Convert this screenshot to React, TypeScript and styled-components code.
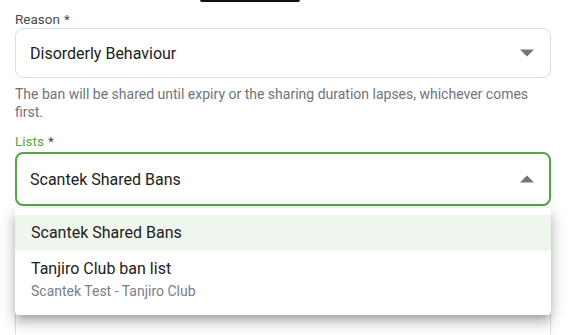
import React from 'react';
import styled, { createGlobalStyle } from 'styled-components';

const GlobalStyle = createGlobalStyle`
  html, body {
    margin: 0;
    padding: 0;
    background: #ffffff;
    font-family: Roboto, "Liberation Sans", Arial, sans-serif;
    overflow: hidden;
  }
`;

const Page = styled.div`
  width: 570px;
  height: 335px;
  padding: 0 19px 0 15px;
  box-sizing: border-box;
  position: relative;
  overflow: hidden;
`;

const ButtonEdge = styled.div`
  width: 100px;
  height: 2px;
  margin-left: 185px;
  background: #111111;
  border-radius: 0 0 4px 4px;
`;

const Field = styled.div<{ $top: number }>`
  margin-top: ${p => p.$top}px;
`;

const Label = styled.div<{ $focused?: boolean }>`
  font-size: 13.5px;
  line-height: 16px;
  color: ${p => (p.$focused ? '#55a644' : '#4a4a4a')};
  margin-bottom: ${p => (p.$focused ? 3 : 1)}px;

  span {
    color: #4a4a4a;
    margin-left: 4px;
  }
`;

const SelectWrap = styled.div`
  position: relative;
`;

const SelectBox = styled.div<{ $focused?: boolean; $height: number }>`
  height: ${p => p.$height}px;
  box-sizing: border-box;
  border: ${p => (p.$focused ? '2px solid #55a644' : '1px solid #d6dfec')};
  border-radius: 8px;
  display: flex;
  align-items: center;
  justify-content: space-between;
  padding: 0 ${p => (p.$focused ? 15 : 16)}px 0 ${p => (p.$focused ? 13 : 14)}px;
  font-size: 16px;
  color: #212121;
  background: #ffffff;
`;

const Arrow = styled.svg`
  width: 14px;
  height: 8px;
  flex-shrink: 0;
`;

const Helper = styled.div`
  margin-top: 7px;
  font-size: 14px;
  line-height: 18px;
  color: #6f747c;
`;

const Menu = styled.div`
  position: absolute;
  left: 0;
  right: 0;
  top: calc(100% + 2px);
  background: #ffffff;
  border-radius: 4px;
  padding: 7px 0 8px;
  box-shadow: 0 5px 6px -3px rgba(0, 0, 0, 0.2), 0 9px 12px 1px rgba(0, 0, 0, 0.14),
    0 3px 16px 2px rgba(0, 0, 0, 0.12);
  z-index: 2;
`;

const Option = styled.div<{ $selected?: boolean }>`
  padding: 8px 16px;
  background: ${p => (p.$selected ? '#eff6ee' : 'transparent')};
  font-size: 16px;
  line-height: 20px;
  color: #212121;
`;

const OptionSub = styled.div`
  margin-top: 4px;
  font-size: 14px;
  line-height: 16px;
  color: #7a7f88;
`;

const Caret = ({ up }: { up?: boolean }) => (
  <Arrow viewBox="0 0 14 8">
    <path d={up ? 'M0 7.5 L7 0.5 L14 7.5 Z' : 'M0 0.5 L7 7.5 L14 0.5 Z'} fill="#757575" />
  </Arrow>
);

export default function App() {
  return (
    <>
      <GlobalStyle />
      <Page>
        <ButtonEdge />
        <Field $top={9}>
          <Label>
            Reason<span>*</span>
          </Label>
          <SelectBox $height={50}>
            Disorderly Behaviour
            <Caret />
          </SelectBox>
          <Helper>
            The ban will be shared until expiry or the sharing duration lapses, whichever comes first.
          </Helper>
        </Field>
        <Field $top={12}>
          <Label $focused>
            Lists<span>*</span>
          </Label>
          <SelectWrap>
            <SelectBox $focused $height={54}>
              Scantek Shared Bans
              <Caret up />
            </SelectBox>
            <Menu>
              <Option $selected>Scantek Shared Bans</Option>
              <Option>
                Tanjiro Club ban list
                <OptionSub>Scantek Test - Tanjiro Club</OptionSub>
              </Option>
            </Menu>
          </SelectWrap>
        </Field>
        <Field $top={20}>
          <SelectBox $height={200} />
        </Field>
      </Page>
    </>
  );
}
